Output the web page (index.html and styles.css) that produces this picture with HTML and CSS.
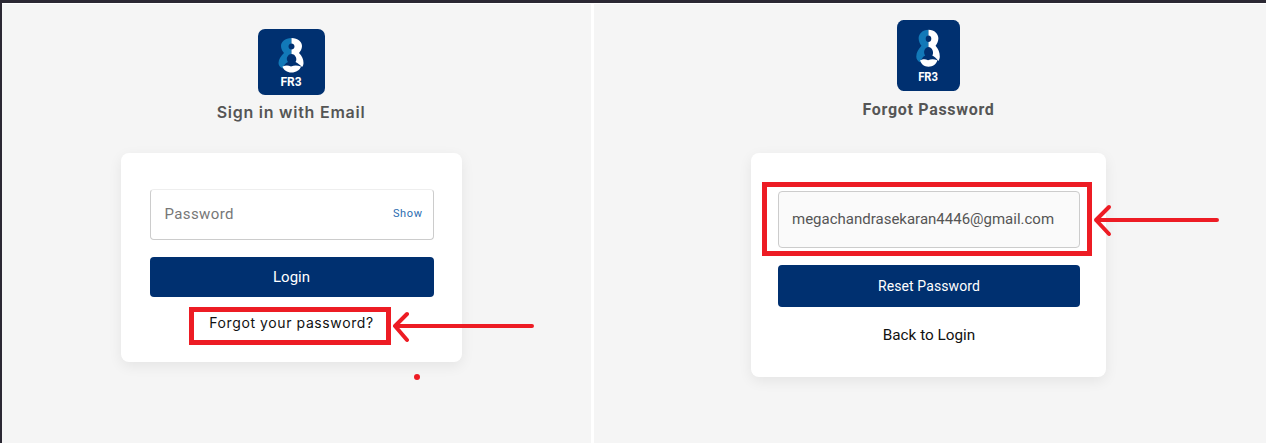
FILE: index.html
```html
<!DOCTYPE html>
<html lang="en">
<head>
  <meta charset="UTF-8" />
  <title>Sign in and Forgot Password</title>
  <link rel="stylesheet" href="styles.css">
</head>
<body>
  <main class="split">
    <!-- Sign in -->
    <section class="panel panel-login">
      <svg class="logo logo-login" viewBox="0 0 67 66" preserveAspectRatio="none">
        <rect width="67" height="66" rx="7" fill="#003070" />
        <path d="M33.5 9 C27 9 23 13 23 17 C23 20 24.5 22 26 24 C23 27 20.5 30 20.5 34 C20.5 36.5 22 38.5 25 39.5 C25.5 36.5 27.5 34 30 33 C29 31.5 28.5 30 29 28.5 C30 26 31.5 25 33.5 25 L33.5 20.5 C32 20.5 30.5 19.5 30.5 17.5 C30.5 15.5 32 14.5 33.5 14.5 Z" fill="#1279b8" />
        <path d="M33.5 9 C40 9 44 13 44 17 C44 20 42.5 22 41 24 C44 27 45.5 30 45.5 34 C45.5 35.5 45 37 44 38 C42 36 40 34 37.5 33 C38.5 31.5 38.5 30 38 28.5 C37 26 35.5 25 33.5 25 L33.5 20.5 C35 20.5 36.5 19.5 36.5 17.5 C36.5 15.5 35 14.5 33.5 14.5 Z" fill="#fff" />
        <path d="M24.5 37.5 C28 36 30 36 33 37.5 C36.5 36 39 36 43 37.5 C42 41 38 43.5 33.5 43.5 C29 43.5 25.5 41 24.5 37.5 Z" fill="#fff" />
        <text x="22.5" y="57" class="logo-text">FR3</text>
      </svg>
      <h2 class="title title-login">Sign in with Email</h2>
      <div class="card card-login">
        <div class="field field-password">
          <span class="placeholder">Password</span>
          <span class="show-link">Show</span>
        </div>
        <button class="primary-btn btn-login">Login</button>
        <a class="forgot-link">Forgot your password?</a>
      </div>
    </section>

    <!-- Forgot password -->
    <section class="panel panel-forgot">
      <svg class="logo logo-forgot" viewBox="0 0 67 66" preserveAspectRatio="none">
        <rect width="67" height="66" rx="7" fill="#003070" />
        <path d="M33.5 9 C27 9 23 13 23 17 C23 20 24.5 22 26 24 C23 27 20.5 30 20.5 34 C20.5 36.5 22 38.5 25 39.5 C25.5 36.5 27.5 34 30 33 C29 31.5 28.5 30 29 28.5 C30 26 31.5 25 33.5 25 L33.5 20.5 C32 20.5 30.5 19.5 30.5 17.5 C30.5 15.5 32 14.5 33.5 14.5 Z" fill="#1279b8" />
        <path d="M33.5 9 C40 9 44 13 44 17 C44 20 42.5 22 41 24 C44 27 45.5 30 45.5 34 C45.5 35.5 45 37 44 38 C42 36 40 34 37.5 33 C38.5 31.5 38.5 30 38 28.5 C37 26 35.5 25 33.5 25 L33.5 20.5 C35 20.5 36.5 19.5 36.5 17.5 C36.5 15.5 35 14.5 33.5 14.5 Z" fill="#fff" />
        <path d="M24.5 37.5 C28 36 30 36 33 37.5 C36.5 36 39 36 43 37.5 C42 41 38 43.5 33.5 43.5 C29 43.5 25.5 41 24.5 37.5 Z" fill="#fff" />
        <text x="22.5" y="57" class="logo-text">FR3</text>
      </svg>
      <h2 class="title title-forgot">Forgot Password</h2>
      <div class="card card-forgot">
        <div class="field field-email">megachandrasekaran4446@gmail.com</div>
        <button class="primary-btn btn-reset">Reset Password</button>
        <a class="back-link">Back to Login</a>
      </div>
    </section>
  </main>

  <!-- red markup drawn on top of the screenshot -->
  <svg class="markup" width="1266" height="443" viewBox="0 0 1266 443">
    <rect x="191.5" y="309.5" width="197" height="33" />
    <rect x="764.5" y="184.5" width="325" height="69" />
    <path d="M532 326 H395 M407 314 L395 326 L407 340" />
    <path d="M1217 220 H1096 M1109 207 L1096 220 L1109 234" />
    <circle cx="417" cy="377" r="3" />
  </svg>
</body>
</html>
```

FILE: styles.css
```css
* {
  box-sizing: border-box;
}

body {
  margin: 0;
  height: 443px;
  overflow: hidden;
  position: relative;
  background-color: #fff;
  font-family: Roboto, "Liberation Sans", sans-serif;
  border-top: 3px solid #2b2833;
  border-left: 2px solid #2b2833;
}

.logo-text {
  font-family: Roboto, sans-serif;
  font-size: 12px;
  font-weight: 700;
  fill: #fff;
}

.split {
  display: flex;
  gap: 3px;
  height: 100%;
  padding-top: 1px;
}

.panel {
  display: flex;
  flex-direction: column;
  align-items: center;
  background-color: #f5f5f5;
}

.panel-login {
  width: 589px;
  padding: 25px 11px 0 0;
}

.panel-forgot {
  flex: 1;
  padding: 16px 3px 0 0;
}

.logo {
  display: block;
}

.logo-login {
  width: 67px;
  height: 66px;
}

.logo-forgot {
  width: 63px;
  height: 71px;
}

.title {
  margin: 8px 0 0;
  color: #555;
  font-size: 16px;
  line-height: 19px;
  font-weight: 700;
}

.title-login {
  font-family: Inter, Roboto, sans-serif;
  font-weight: 600;
  letter-spacing: 0.75px;
}

.title-forgot {
  margin-top: 9px;
  letter-spacing: 0.7px;
}

.card {
  display: flex;
  flex-direction: column;
  align-items: center;
  background-color: #fff;
  border-radius: 8px;
  box-shadow: 0 4px 14px rgba(0, 0, 0, 0.07);
}

.card-login {
  width: 341px;
  height: 209px;
  margin-top: 31px;
  padding: 36px 28px 0 29px;
}

.card-forgot {
  width: 355px;
  height: 224px;
  margin-top: 34px;
  padding: 38px 26px 0 27px;
}

.field {
  width: 100%;
  display: flex;
  align-items: center;
  border-radius: 4px;
}

.field-password {
  justify-content: space-between;
  height: 51px;
  padding: 0 10px 2px 14px;
  border: 1px solid #ccc;
  border-top-color: #eee;
}

.placeholder {
  color: #777;
  font-size: 15px;
  letter-spacing: 0.4px;
}

.show-link {
  color: #2b6cb0;
  font-size: 11px;
  letter-spacing: 0.6px;
}

.field-email {
  height: 57px;
  padding: 0 13px 2px;
  background-color: #fafafa;
  border: 1px solid #ccc;
  color: #555;
  font-size: 15px;
  white-space: nowrap;
}

.primary-btn {
  width: 100%;
  border: none;
  border-radius: 4px;
  background-color: #003070;
  color: #fff;
  font-family: inherit;
  font-size: 15px;
  font-weight: 400;
}

.btn-login {
  height: 40px;
  margin-top: 17px;
}

.btn-reset {
  height: 42px;
  margin-top: 17px;
  font-size: 14px;
  letter-spacing: 0.1px;
}

.forgot-link {
  margin-top: 17px;
  color: #111;
  font-family: Inter, Roboto, sans-serif;
  font-size: 14px;
  line-height: 18px;
  letter-spacing: 0.6px;
}

.back-link {
  margin-top: 18px;
  color: #111;
  font-size: 15.3px;
  line-height: 20px;
}

.markup {
  position: absolute;
  top: -3px;
  left: -2px;
  fill: none;
  stroke: #ed1c24;
  stroke-width: 5;
}

.markup path {
  stroke-width: 4;
  stroke-linecap: round;
  stroke-linejoin: round;
}

.markup circle {
  fill: #ed1c24;
  stroke: none;
}
```
